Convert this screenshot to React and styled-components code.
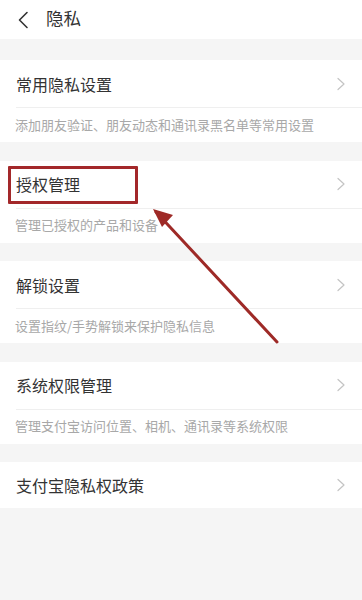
import React from 'react'
import styled, { createGlobalStyle } from 'styled-components'

const GlobalStyle = createGlobalStyle`
	html,
	body {
		margin: 0;
		padding: 0;
		background: #f5f5f5;
	}

	body {
		font-family: 'Noto Sans CJK SC', 'Noto Sans', sans-serif;
		-webkit-font-smoothing: antialiased;
	}

	* {
		box-sizing: border-box;
	}
`

const sections = [
	{ title: '常用隐私设置', desc: '添加朋友验证、朋友动态和通讯录黑名单等常用设置' },
	{ title: '授权管理', desc: '管理已授权的产品和设备', marked: true },
	{ title: '解锁设置', desc: '设置指纹/手势解锁来保护隐私信息' },
	{ title: '系统权限管理', desc: '管理支付宝访问位置、相机、通讯录等系统权限' },
	{ title: '支付宝隐私权政策' },
]

const Chevron = ({ className }) => (
	<svg className={className} width="10" height="14" viewBox="0 0 10 14" fill="none">
		<path d="M2 1.5 L8 7 L2 12.5" stroke="currentColor" strokeWidth="1.2" strokeLinecap="round" strokeLinejoin="round" />
	</svg>
)

const BackIcon = () => (
	<svg width="12" height="18" viewBox="0 0 12 18" fill="none">
		<path d="M10 1.5 L2.5 9 L10 16.5" stroke="#333" strokeWidth="1.6" strokeLinecap="round" strokeLinejoin="round" />
	</svg>
)

const App = () => (
	<Page>
		<GlobalStyle />
		<Header>
			<BackIcon />
			<Title>隐私</Title>
		</Header>
		<List>
			{sections.map((s) => (
				<Section key={s.title}>
					<Row>
						<RowTitle>{s.title}</RowTitle>
						<Arrow />
					</Row>
					{s.desc && <Desc>{s.desc}</Desc>}
				</Section>
			))}
		</List>
		<Mark />
		<Pointer width="362" height="600" viewBox="0 0 362 600">
			<line x1="277" y1="342" x2="156" y2="212" stroke="#9e2a27" strokeWidth="3" strokeLinecap="round" />
			<path d="M153 209 L173 215 L162 227 Z" fill="#9e2a27" />
		</Pointer>
	</Page>
)

export default App

const Page = styled.div`
	position: relative;
	width: 362px;
	height: 600px;
	overflow: hidden;
	background: #f5f5f5;
`

const Header = styled.div`
	height: 39px;
	display: flex;
	align-items: center;
	gap: 17px;
	padding: 0 0 0 17px;
	background: #fff;
`

const Title = styled.div`
	font-size: 17.5px;
	color: #333;
	line-height: 1;
	margin-top: -3px;
`

const List = styled.div`
	display: flex;
	flex-direction: column;
	gap: 18.5px;
	padding-top: 21px;
`

const Section = styled.div`
	background: #fff;
	display: flex;
	flex-direction: column;
`

const Row = styled.div`
	height: 48px;
	display: flex;
	align-items: center;
	justify-content: space-between;
	margin-left: 16px;
	padding-right: 16px;
	border-bottom: 1px solid #efefef;

	&:last-child {
		height: 46px;
		border-bottom: none;
	}
`

const RowTitle = styled.div`
	font-size: 16px;
	color: #333;
`

const Arrow = styled(Chevron)`
	color: #c4c4c4;
`

const Desc = styled.div`
	height: 34px;
	padding-bottom: 2px;
	display: flex;
	align-items: center;
	padding-left: 15px;
	font-size: 13px;
	color: #a8a8a8;
	white-space: nowrap;
`

const Mark = styled.div`
	position: absolute;
	left: 8px;
	top: 166px;
	width: 130px;
	height: 38px;
	border: 3px solid #a3282a;
	border-radius: 1px;
	pointer-events: none;
`

const Pointer = styled.svg`
	position: absolute;
	left: 0;
	top: 0;
	pointer-events: none;
`
